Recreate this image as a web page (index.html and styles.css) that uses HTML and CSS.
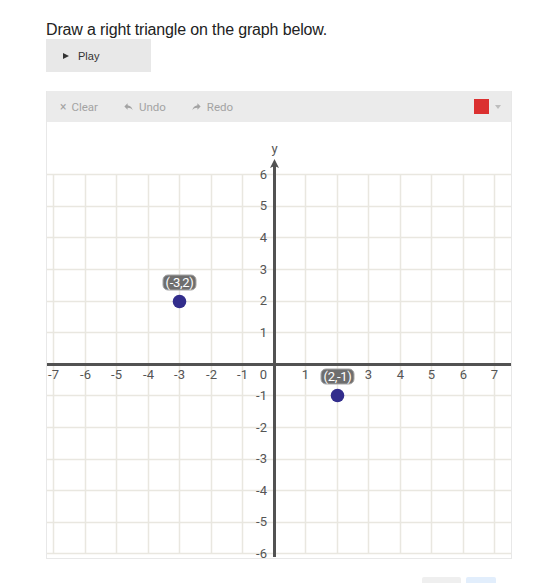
FILE: index.html
```html
<!DOCTYPE html>
<html>
<head>
<meta charset="utf-8">
<link rel="stylesheet" href="styles.css">
</head>
<body>
<div class="page">
  <p class="prompt">Draw a right triangle on the graph below.</p>
  <button class="play"><span class="play-icon"></span><span>Play</span></button>

  <div class="graph">
    <div class="toolbar">
      <div class="tools">
        <span class="tool"><span class="x">×</span>Clear</span>
        <span class="tool">
          <svg class="ticon" viewBox="0 0 24 24"><path d="M10 9V5l-7 7 7 7v-4.1c5 0 8.5 1.6 11 5.1-1-5-4-10-11-11z"/></svg>Undo</span>
        <span class="tool">
          <svg class="ticon" viewBox="0 0 24 24"><path transform="translate(24 0) scale(-1 1)" d="M10 9V5l-7 7 7 7v-4.1c5 0 8.5 1.6 11 5.1-1-5-4-10-11-11z"/></svg>Redo</span>
      </div>
      <div class="color">
        <span class="swatch"></span><span class="caret"></span>
      </div>
    </div>
    <svg class="plane" width="464" height="436" viewBox="0 -1 464 436">
      <path class="grid" d="M6.5 51.5V430.5M38.5 51.5V430.5M69.5 51.5V430.5M101.5 51.5V430.5M132.5 51.5V430.5M164.5 51.5V430.5M195.5 51.5V430.5M258.5 51.5V430.5M290.5 51.5V430.5M321.5 51.5V430.5M353.5 51.5V430.5M384.5 51.5V430.5M416.5 51.5V430.5M447.5 51.5V430.5
        M0 51.5H464M0 83.5H464M0 114.5H464M0 146.5H464M0 178.5H464M0 209.5H464M0 272.5H464M0 304.5H464M0 336.5H464M0 367.5H464M0 399.5H464M0 430.5H464"/>
      <path class="axis" d="M0 241.5H464M227.5 434V41"/>
      <path class="arrow" d="M227.5 36L232 45L227.5 43L223 45Z"/>
      <text class="axis-name" x="227.5" y="30">y</text>

      <g class="xt">
        <text x="6.5" y="256">-7</text>
        <text x="38.5" y="256">-6</text>
        <text x="69.5" y="256">-5</text>
        <text x="101.5" y="256">-4</text>
        <text x="132.5" y="256">-3</text>
        <text x="164.5" y="256">-2</text>
        <text x="195.5" y="256">-1</text>
        <text x="216.5" y="256">0</text>
        <text x="258.5" y="256">1</text>
        <text x="321.5" y="256">3</text>
        <text x="353.5" y="256">4</text>
        <text x="384.5" y="256">5</text>
        <text x="416.5" y="256">6</text>
        <text x="447.5" y="256">7</text>
      </g>
      <g class="yt">
        <text x="220" y="55.7">6</text>
        <text x="220" y="87.3">5</text>
        <text x="220" y="118.9">4</text>
        <text x="220" y="150.5">3</text>
        <text x="220" y="182.1">2</text>
        <text x="220" y="213.7">1</text>
        <text x="220" y="276.9">-1</text>
        <text x="220" y="308.5">-2</text>
        <text x="220" y="340.1">-3</text>
        <text x="220" y="371.7">-4</text>
        <text x="220" y="403.3">-5</text>
        <text x="220" y="434.9">-6</text>
      </g>

      <circle class="pt" cx="132.5" cy="178.5" r="6.8"/>
      <circle class="pt" cx="290.5" cy="272.5" r="6.8"/>

      <rect class="tag" x="116" y="152" width="33" height="15" rx="5"/>
      <text class="tag-text" x="132.5" y="164">(-3,2)</text>
      <rect class="tag" x="274" y="246" width="33" height="15" rx="5"/>
      <text class="tag-text" x="290.5" y="258">(2,-1)</text>
    </svg>
  </div>

  <div class="footer">
    <span class="btn btn-gray"></span>
    <span class="btn btn-blue"></span>
  </div>
</div>
</body>
</html>
```
FILE: styles.css
```css
html, body {
  margin: 0;
  padding: 0;
  background: #fff;
}

.page {
  height: 583px;
  overflow: hidden;
  padding-left: 46px;
  box-sizing: border-box;
  font-family: "Liberation Sans", Arial, sans-serif;
}

.prompt {
  margin: 0;
  padding-top: 21px;
  font-size: 16px;
  line-height: 18px;
  letter-spacing: -0.15px;
  color: #222;
}

.play {
  display: flex;
  align-items: center;
  width: 105px;
  height: 33px;
  margin: 0;
  padding: 0 0 0 17px;
  border: none;
  background: #e8e8e8;
  font-family: "Liberation Sans", Arial, sans-serif;
  font-size: 11px;
  color: #333;
  gap: 9px;
}

.play-icon {
  width: 0;
  height: 0;
  border-left: 6px solid #333;
  border-top: 3.5px solid transparent;
  border-bottom: 3.5px solid transparent;
}

.graph {
  width: 466px;
  margin-top: 19px;
  border: 1px solid #e8e8e8;
  border-top: none;
  box-sizing: border-box;
}

.toolbar {
  height: 31px;
  background: #ebebeb;
  display: flex;
  align-items: center;
  justify-content: space-between;
  padding: 0 10px 0 13px;
  font-family: Roboto, "Liberation Sans", sans-serif;
  font-size: 11.5px;
  color: #a3a3a3;
}

.tools {
  display: flex;
  align-items: center;
  gap: 25px;
}

.tool {
  display: inline-flex;
  align-items: center;
  gap: 5px;
}

.x {
  font-size: 12px;
  line-height: 1;
}

.ticon {
  width: 11px;
  height: 11px;
  fill: #a3a3a3;
}

.color {
  display: flex;
  align-items: center;
  gap: 6px;
}

.swatch {
  width: 15px;
  height: 15px;
  background: #db3030;
}

.caret {
  width: 0;
  height: 0;
  border-top: 4px solid #bdbdbd;
  border-left: 3.5px solid transparent;
  border-right: 3.5px solid transparent;
}

.plane {
  display: block;
  overflow: visible;
  background: #fff;
}

.grid {
  fill: none;
  stroke: #e9e7e0;
  stroke-width: 1.5;
}

.axis {
  fill: none;
  stroke: #525252;
  stroke-width: 3;
}

.arrow {
  fill: #525252;
}

.axis-name {
  font-family: Roboto, sans-serif;
  font-size: 13px;
  fill: #555;
  text-anchor: middle;
}

.xt text,
.yt text {
  font-family: Roboto, sans-serif;
  font-size: 13px;
  fill: #555;
}

.xt text {
  text-anchor: middle;
}

.yt text {
  text-anchor: end;
}

.pt {
  fill: #322d8c;
}

.tag {
  fill: #6e6e6e;
  stroke: #a5a5a5;
  stroke-width: 1;
}

.tag-text {
  font-family: Roboto, sans-serif;
  font-size: 13px;
  letter-spacing: -0.3px;
  fill: #fff;
  text-anchor: middle;
}

.footer {
  display: flex;
  justify-content: flex-start;
  gap: 5px;
  margin-top: 18px;
  padding-left: 376px;
}

.btn {
  display: block;
  height: 24px;
  border-radius: 2px;
}

.btn-gray {
  width: 39px;
  background: #efefef;
}

.btn-blue {
  width: 30px;
  background: #e2eefc;
}
```
